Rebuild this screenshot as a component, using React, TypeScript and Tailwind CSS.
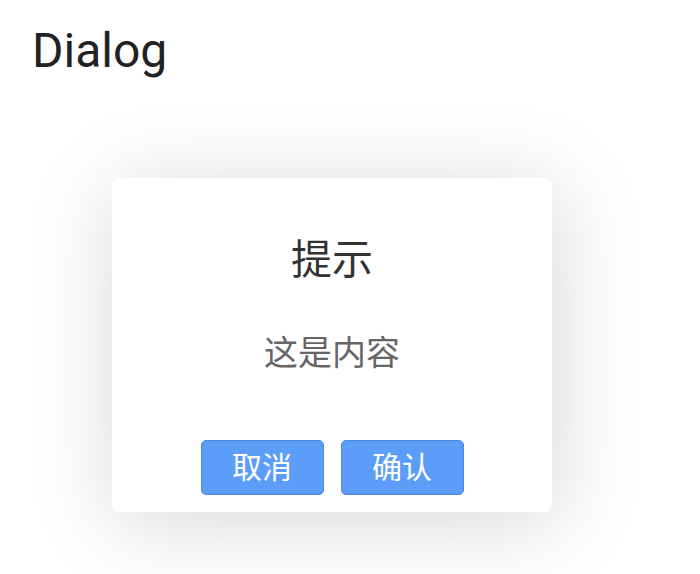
import React from 'react';

const cjk = { fontFamily: 'Roboto, "Noto Sans CJK SC", sans-serif' };

export default function App() {
  return (
    <div className="w-[700px] h-[574px] bg-white overflow-hidden" style={cjk}>
      <h1 className="pl-[32px] pt-[21px] text-[48px] leading-[60px] text-[#222222]">Dialog</h1>

      <div className="pl-[112px] pt-[97px]">
        {/* dialog box */}
        <div className="w-[440px] h-[334px] bg-white rounded-lg shadow-[4px_10px_90px_rgba(0,0,0,0.16)] flex flex-col items-center">
          <div className="pt-[57px] text-[41px] leading-[50px] text-[#333333]">提示</div>
          <div className="pt-[47px] text-[34px] leading-[42px] text-[#666666]">这是内容</div>
          <div className="mt-auto pb-[17px] flex gap-[17px]">
            <button className="w-[123px] h-[55px] rounded-[5px] bg-[#5b9df9] border border-[#4a88dc] text-white text-[30px] leading-none">取消</button>
            <button className="w-[123px] h-[55px] rounded-[5px] bg-[#5b9df9] border border-[#4a88dc] text-white text-[30px] leading-none">确认</button>
          </div>
        </div>
      </div>
    </div>
  );
}
